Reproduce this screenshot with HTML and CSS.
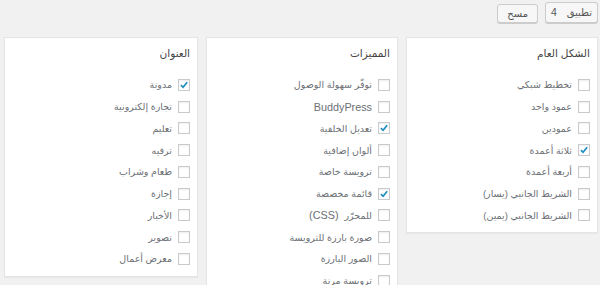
FILE: index.html
```html
<!DOCTYPE html>
<html lang="ar" dir="rtl">
<head>
    <meta charset="UTF-8">
    <title>تصفية القوالب</title>
    <link rel="stylesheet" href="styles.css">
</head>
<body>
    <div class="filter-bar">
        <button class="button apply">تطبيق <span class="count">4</span></button>
        <button class="button clear">مسح</button>
    </div>

    <div class="filter-groups">
        <div class="filter-group">
            <h4>الشكل العام</h4>
            <ul>
                <li><span class="cb"></span>تخطيط شبكي</li>
                <li><span class="cb"></span>عمود واحد</li>
                <li><span class="cb"></span>عمودين</li>
                <li><span class="cb checked"><svg viewBox="0 0 12 12"><path d="M2.3 6.2 L4.9 8.8 L9.8 2.6"/></svg></span>ثلاثة أعمدة</li>
                <li><span class="cb"></span>أربعة أعمدة</li>
                <li><span class="cb"></span>الشريط الجانبي (يسار)</li>
                <li><span class="cb"></span>الشريط الجانبي (يمين)</li>
            </ul>
        </div>

        <div class="filter-group">
            <h4>المميزات</h4>
            <ul>
                <li><span class="cb"></span>توفّر سهولة الوصول</li>
                <li><span class="cb"></span><span class="latin">BuddyPress</span></li>
                <li><span class="cb checked"><svg viewBox="0 0 12 12"><path d="M2.3 6.2 L4.9 8.8 L9.8 2.6"/></svg></span>تعديل الخلفية</li>
                <li><span class="cb"></span>ألوان إضافية</li>
                <li><span class="cb"></span>ترويسة خاصة</li>
                <li><span class="cb checked"><svg viewBox="0 0 12 12"><path d="M2.3 6.2 L4.9 8.8 L9.8 2.6"/></svg></span>قائمة مخصصة</li>
                <li><span class="cb"></span>للمحرّر <span class="latin">(CSS)</span></li>
                <li><span class="cb"></span>صورة بارزة للترويسة</li>
                <li><span class="cb"></span>الصور البارزة</li>
                <li><span class="cb"></span>ترويسة مرنة</li>
            </ul>
        </div>

        <div class="filter-group">
            <h4>العنوان</h4>
            <ul>
                <li><span class="cb checked"><svg viewBox="0 0 12 12"><path d="M2.3 6.2 L4.9 8.8 L9.8 2.6"/></svg></span>مدونة</li>
                <li><span class="cb"></span>تجارة إلكترونية</li>
                <li><span class="cb"></span>تعليم</li>
                <li><span class="cb"></span>ترفيه</li>
                <li><span class="cb"></span>طعام وشراب</li>
                <li><span class="cb"></span>إجازة</li>
                <li><span class="cb"></span>الأخبار</li>
                <li><span class="cb"></span>تصوير</li>
                <li><span class="cb"></span>معرض أعمال</li>
            </ul>
        </div>
    </div>
</body>
</html>
```

FILE: styles.css
```css
body {
    margin: 0;
    padding: 2px 2px 0 0;
    background: #f1f1f1;
    font-family: "Liberation Sans", "DejaVu Sans", sans-serif;
    font-size: 9.5px;
    color: #6c7075;
}
.latin {
    font-size: 10.8px;
}
.filter-bar {
    display: flex;
    align-items: flex-end;
    gap: 7px;
    height: 21px;
}
.button {
    font-family: inherit;
    font-size: 10px;
    color: #555;
    background: #f7f7f7;
    border: 1px solid #ccc;
    border-radius: 3px;
    box-shadow: 0 1px 0 #ccc;
    padding: 0 5px;
    height: 20px;
    line-height: 18px;
    margin: 0;
}
.button.apply {
    height: 21px;
}
.button.clear {
    height: 19px;
    padding: 0 9px;
}
.count {
    margin-right: 7px;
    font-size: 10.5px;
}
.filter-groups {
    display: grid;
    grid-template-columns: 192px 192px 194px;
    column-gap: 8px;
    align-items: start;
    margin-top: 14px;
}
.filter-group {
    background: #fff;
    border: 1px solid #e5e5e5;
    box-shadow: 0 1px 1px rgba(0, 0, 0, 0.04);
    padding: 7px 7px 6px;
}
.filter-group h4 {
    margin: 0 0 13px;
    font-size: 10.5px;
    font-weight: normal;
    line-height: 16px;
    color: #444;
}
.filter-group ul {
    list-style: none;
    margin: 0;
    padding: 0;
}
.filter-group li {
    display: flex;
    align-items: center;
    gap: 6px;
    height: 21.75px;
}
.cb {
    box-sizing: border-box;
    width: 12px;
    height: 12px;
    border: 1px solid #c8cbce;
    background: #fff;
    box-shadow: inset 0 1px 2px rgba(0, 0, 0, 0.07);
    flex: none;
    display: flex;
}
.cb svg {
    width: 10px;
    height: 10px;
    fill: none;
    stroke: #1e8cbe;
    stroke-width: 2;
}
```
